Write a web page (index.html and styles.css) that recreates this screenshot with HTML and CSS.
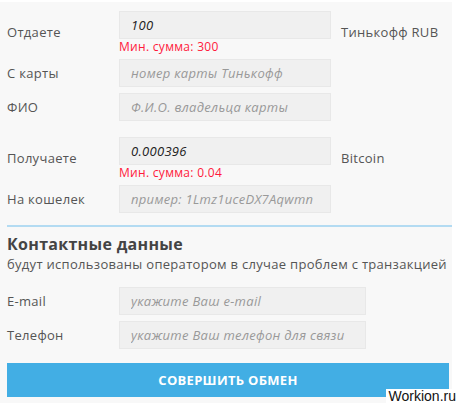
FILE: index.html
```html
<!DOCTYPE html>
<html lang="ru">
<head>
  <meta charset="UTF-8">
  <title>Обмен</title>
  <link rel="stylesheet" href="styles.css">
</head>
<body>
  <div class="exchange">
    <div class="group">
      <div class="row">
        <label class="label" for="giveSum">Отдаете</label>
        <div class="field">
          <input class="input" id="giveSum" type="text" value="100">
          <div class="error">Мин. сумма: 300</div>
        </div>
        <div class="currency">Тинькофф RUB</div>
      </div>
      <div class="row">
        <label class="label" for="cardFrom">С карты</label>
        <div class="field">
          <input class="input" id="cardFrom" type="text" placeholder="номер карты Тинькофф">
        </div>
      </div>
      <div class="row">
        <label class="label" for="fio">ФИО</label>
        <div class="field">
          <input class="input" id="fio" type="text" placeholder="Ф.И.О. владельца карты">
        </div>
      </div>
    </div>

    <div class="group">
      <div class="row">
        <label class="label" for="getSum">Получаете</label>
        <div class="field">
          <input class="input" id="getSum" type="text" value="0.000396">
          <div class="error">Мин. сумма: 0.04</div>
        </div>
        <div class="currency">Bitcoin</div>
      </div>
      <div class="row">
        <label class="label" for="wallet">На кошелек</label>
        <div class="field">
          <input class="input" id="wallet" type="text" placeholder="пример: 1Lmz1uceDX7Aqwmn">
        </div>
      </div>
    </div>

    <div class="contacts">
      <h2>Контактные данные</h2>
      <p class="hint">будут использованы оператором в случае проблем с транзакцией</p>
      <div class="row">
        <label class="label" for="email">E-mail</label>
        <div class="field wide">
          <input class="input" id="email" type="text" placeholder="укажите Ваш e-mail">
        </div>
      </div>
      <div class="row">
        <label class="label" for="phone">Телефон</label>
        <div class="field wide">
          <input class="input" id="phone" type="text" placeholder="укажите Ваш телефон для связи">
        </div>
      </div>
    </div>

    <button class="submit" type="button">Совершить обмен</button>
  </div>

  <div class="watermark">Workion.ru</div>
</body>
</html>
```

FILE: styles.css
```css
body {
  margin: 0;
  background: #fff;
  font-family: "Open Sans", sans-serif;
  letter-spacing: 0.3px;
  color: #555;
  position: relative;
  height: 403px;
  overflow: hidden;
}
.exchange {
  width: 452px;
  margin-top: 2px;
  padding: 9px 0 20px 7px;
  box-sizing: border-box;
  background: #f8f8f8;
}
.group {
  display: flex;
  flex-direction: column;
  gap: 6px;
}
.group + .group {
  margin-top: 16px;
}
.row {
  display: flex;
  align-items: center;
}
.label {
  width: 112px;
  font-size: 13px;
  color: #555;
}
.field {
  width: 212px;
  display: flex;
  flex-direction: column;
}
.field.wide {
  width: 247px;
}
.input {
  height: 28px;
  padding: 0 11px;
  border: 1px solid #e8e8e8;
  background: #f0f0f0;
  box-sizing: border-box;
  font-family: inherit;
  font-size: 13px;
  font-style: italic;
  letter-spacing: 0.3px;
  color: #222;
  outline: none;
}
.input::placeholder {
  color: #999;
}
.error {
  margin-top: 1px;
  font-size: 12px;
  line-height: 13px;
  color: #ff1a3c;
}
.currency {
  margin-left: 10px;
  font-size: 13px;
  color: #555;
}
.contacts {
  margin-top: 12px;
  padding-top: 7px;
  border-top: 2px solid #b3dbf2;
}
.contacts h2 {
  margin: 0;
  font-size: 16px;
  line-height: 21px;
  color: #444;
}
.hint {
  margin: 0 0 14px;
  font-size: 13px;
  line-height: 18px;
  color: #555;
}
.contacts .row + .row {
  margin-top: 6px;
}
.submit {
  display: block;
  width: 442px;
  height: 34px;
  margin-top: 14px;
  border: none;
  background: #42aee4;
  color: #fff;
  font-family: inherit;
  font-size: 13px;
  font-weight: bold;
  letter-spacing: 0.3px;
  text-transform: uppercase;
  cursor: pointer;
}
.watermark {
  position: absolute;
  right: 1px;
  bottom: 0;
  padding: 0 0 0 3px;
  background: #fff;
  font-family: "Liberation Sans", sans-serif;
  font-size: 14px;
  line-height: 14px;
  letter-spacing: 0;
  color: #111;
}
```
